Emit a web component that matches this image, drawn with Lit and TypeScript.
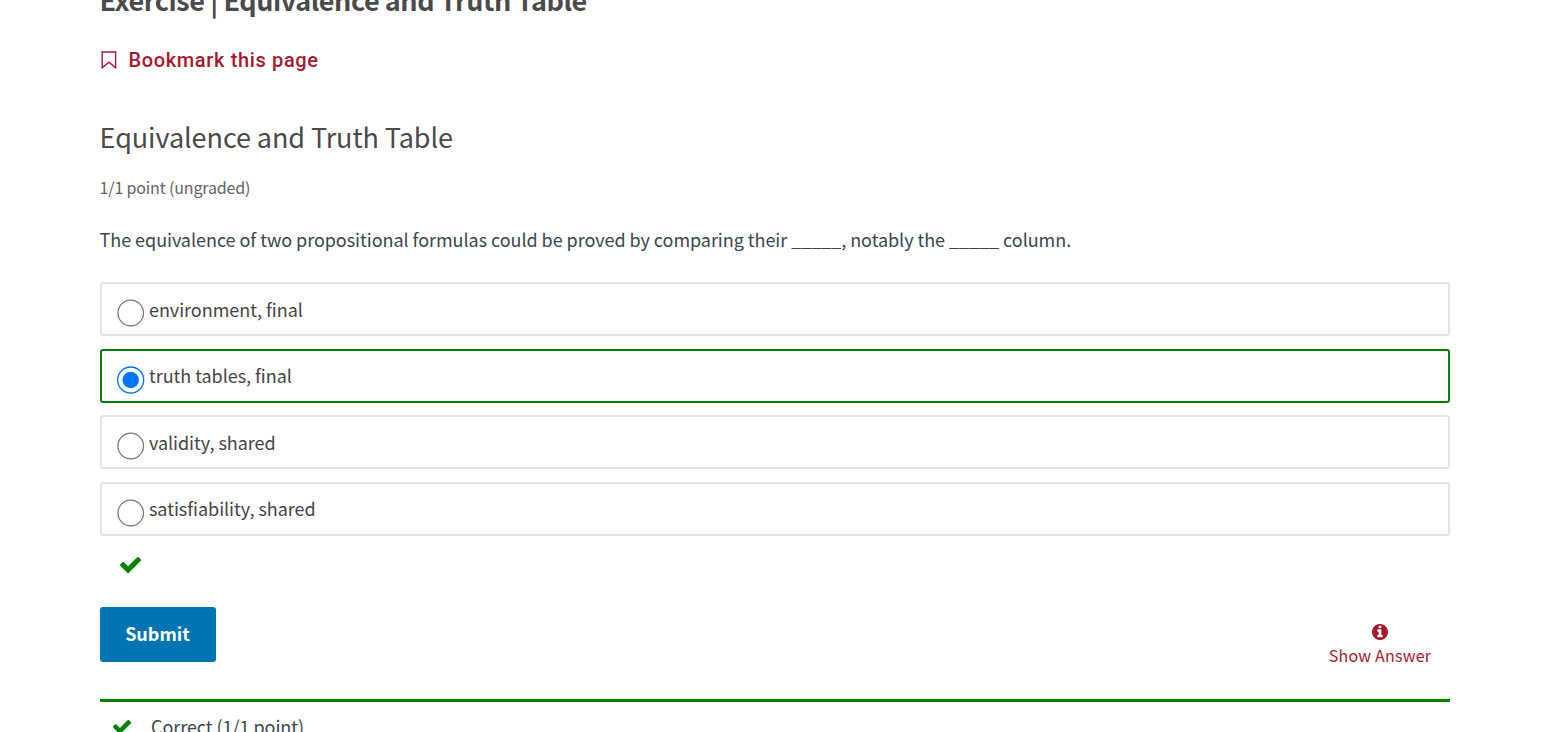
import { LitElement, html, css } from "lit";
import { customElement, property } from "lit/decorators.js";
import { classMap } from "lit/directives/class-map.js";

@customElement("check-icon")
class CheckIcon extends LitElement {
  static styles = css`
    :host { display: block; color: #008100; }
    svg { display: block; width: 100%; }
  `;
  render() {
    return html`<svg viewBox="121 334 1550 1188" fill="currentColor"><path d="M1671 566q0 40-28 68l-724 724-136 136q-28 28-68 28t-68-28l-136-136-362-362q-28-28-28-68t28-68l136-136q28-28 68-28t68 28l294 295 656-657q28-28 68-28t68 28l136 136q28 28 28 68z"/></svg>`;
  }
}

@customElement("choice-option")
class ChoiceOption extends LitElement {
  @property() label = "";
  @property({ type: Boolean }) checked = false;
  static styles = css`
    :host { display: block; }
    .box {
      box-sizing: border-box; height: 54px; border: 2px solid #e4e4e4; border-radius: 3px;
      display: flex; align-items: center; padding-left: 15px; gap: 4px; color: #454545;
      font-size: 18px; line-height: 30px; white-space: nowrap;
    }
    .box.correct { border-color: #008100; }
    .radio { width: 28px; height: 28px; flex: none; margin-top: 8px; }
    .text { letter-spacing: -0.04px; margin-bottom: 0.6px; }
  `;
  render() {
    return html`<label class=${classMap({ box: true, correct: this.checked })}>
      <svg class="radio" viewBox="0 0 28 28">
        ${this.checked
          ? html`<svg viewBox="0 0 28 28"><circle cx="13.7" cy="14" r="13" fill="#fff" stroke="#0075ff" stroke-width="1.3"/><circle cx="13.7" cy="14" r="8.3" fill="#0075ff"/></svg>`
          : html`<svg viewBox="0 0 28 28"><circle cx="13.7" cy="14" r="12.8" fill="#fff" stroke="#767676" stroke-width="1.2"/></svg>`}
      </svg>
      <span class="text">${this.label}</span>
    </label>`;
  }
}

@customElement("app-root")
class AppRoot extends LitElement {
  static styles = css`
    :host {
      display: block; box-sizing: border-box; height: 732px; overflow: hidden; background: #fff;
      padding: 0 96px 0 99.6px; font-family: "Noto Sans CJK SC", "Source Sans Pro", sans-serif;
    }
    h1, h2, p { margin: 0; white-space: nowrap; }
    h1 { margin-top: -20px; font-size: 27px; line-height: 40px; font-weight: 600; color: #4a4a4a; letter-spacing: -0.44px; }
    .bookmark {
      margin-top: 25px; height: 30px; display: flex; align-items: center; gap: 11.5px; padding-left: 1.4px;
      color: #a71930; font: 500 20px/30px Roboto, sans-serif; letter-spacing: 0.64px;
    }
    .bookmark svg { width: 16px; height: 18px; }
    h2 { margin-top: 42px; font-size: 27px; line-height: 40px; font-weight: 400; color: #4a4a4a; letter-spacing: -0.07px; }
    .points { margin-top: 18px; font-size: 16px; line-height: 24px; color: #646464; letter-spacing: -0.16px; }
    .question { margin-top: 25px; font-size: 18px; line-height: 30px; color: #3a474f; letter-spacing: -0.047px; }
    .options { width: 1350px; margin: 28px 0 0 0.4px; display: grid; gap: 12.5px; }
    .status { width: 21px; margin: 21.6px 0 0 20px; }
    .actions { width: 1350px; margin: 33.8px 0 0 0.4px; height: 55px; display: flex; justify-content: space-between; }
    .submit {
      width: 116px; height: 55px; padding: 0 1px 3px 0; border: 0; border-radius: 3px; background: #0075b4; color: #fff;
      font: 600 18px/52px "Noto Sans CJK SC", sans-serif;
    }
    .answer {
      width: 140px; display: flex; flex-direction: column; align-items: center; padding-top: 16.7px;
      color: #a71930; font-size: 16px; line-height: 24px; white-space: nowrap; letter-spacing: 0.2px;
    }
    .answer svg { width: 16px; height: 16px; flex: none; }
    .answer span { margin-top: 3.3px; }
    .notice {
      width: 1350px; box-sizing: border-box; margin: 37px 0 0 0.4px; border-top: 3px solid #008100; display: flex; align-items: flex-start;
      padding: 11px 0 0 13px; gap: 20px; color: #3a474f; font-size: 18px; line-height: 27px; letter-spacing: -0.05px;
    }
    .notice check-icon { width: 18px; margin-top: 7.5px; }
  `;
  render() {
    return html`
      <h1>Exercise | Equivalence and Truth Table</h1>
      <div class="bookmark">
        <svg viewBox="0 0 16 18" fill="none" stroke="currentColor" stroke-width="1.4"><path d="M1.2 1h13.4v15.8L7.9 11.2l-6.7 5.6z"/></svg>
        <span>Bookmark this page</span>
      </div>
      <h2>Equivalence and Truth Table</h2>
      <p class="points">1/1 point (ungraded)</p>
      <p class="question">The equivalence of two propositional formulas could be proved by comparing their _____, notably the _____ column.</p>
      <div class="options">
        <choice-option label="environment, final"></choice-option>
        <choice-option label="truth tables, final" checked></choice-option>
        <choice-option label="validity, shared"></choice-option>
        <choice-option label="satisfiability, shared"></choice-option>
      </div>
      <check-icon class="status"></check-icon>
      <div class="actions">
        <button class="submit">Submit</button>
        <div class="answer">
          <svg viewBox="128 128 1536 1536" fill="currentColor"><path d="M1152 1376v-160q0-14-9-23t-23-9h-96v-512q0-14-9-23t-23-9h-320q-14 0-23 9t-9 23v160q0 14 9 23t23 9h96v320h-96q-14 0-23 9t-9 23v160q0 14 9 23t23 9h448q14 0 23-9t9-23zm-128-896v-160q0-14-9-23t-23-9h-192q-14 0-23 9t-9 23v160q0 14 9 23t23 9h192q14 0 23-9t9-23zm640 416q0 209-103 385.5t-279.5 279.5-385.5 103-385.5-103-279.5-279.5-103-385.5 103-385.5 279.5-279.5 385.5-103 385.5 103 279.5 279.5 103 385.5z"/></svg>
          <span>Show Answer</span>
        </div>
      </div>
      <div class="notice"><check-icon></check-icon><span>Correct (1/1 point)</span></div>
    `;
  }
}
